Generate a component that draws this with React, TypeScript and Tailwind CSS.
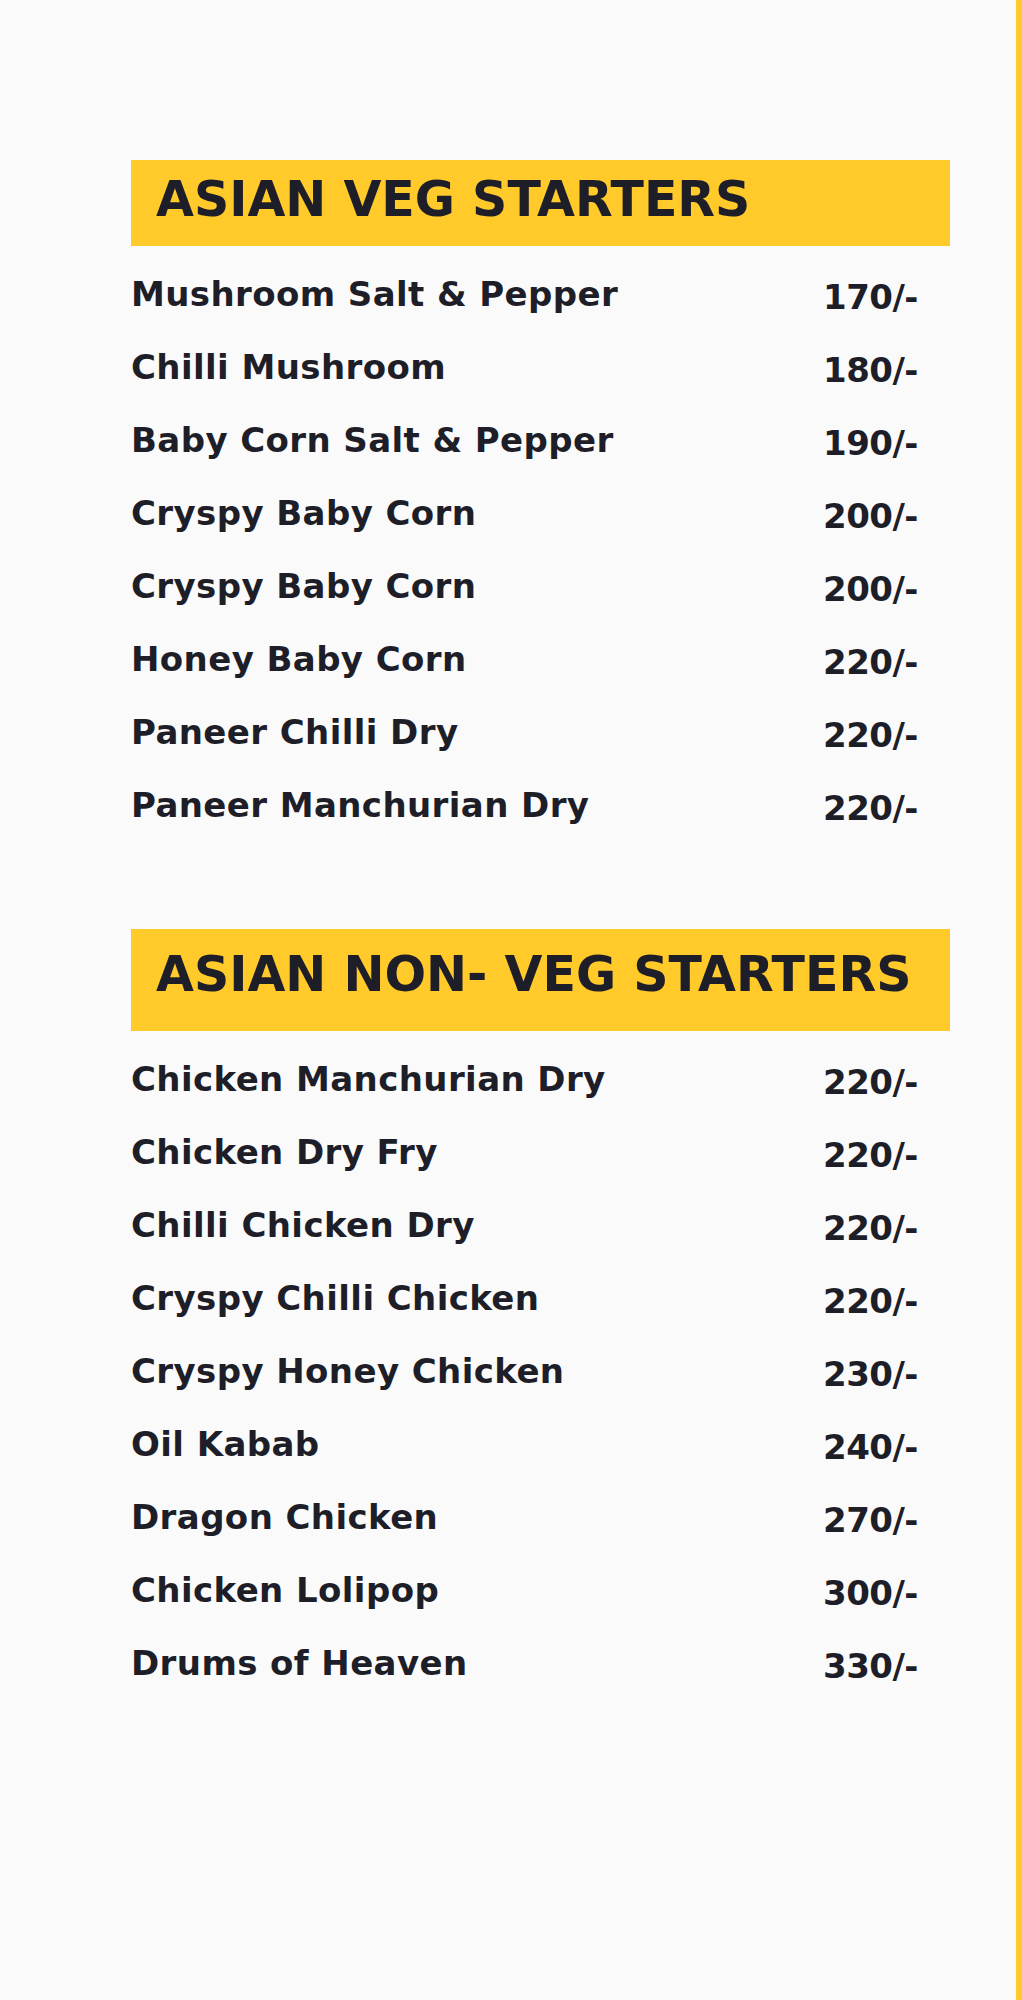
import React from "react";

const veg: [string, string][] = [
  ["Mushroom Salt & Pepper", "170/-"],
  ["Chilli Mushroom", "180/-"],
  ["Baby Corn Salt & Pepper", "190/-"],
  ["Cryspy Baby Corn", "200/-"],
  ["Cryspy Baby Corn", "200/-"],
  ["Honey Baby Corn", "220/-"],
  ["Paneer Chilli Dry", "220/-"],
  ["Paneer Manchurian Dry", "220/-"],
];

const nonVeg: [string, string][] = [
  ["Chicken Manchurian Dry", "220/-"],
  ["Chicken Dry Fry", "220/-"],
  ["Chilli Chicken Dry", "220/-"],
  ["Cryspy Chilli Chicken", "220/-"],
  ["Cryspy Honey Chicken", "230/-"],
  ["Oil Kabab", "240/-"],
  ["Dragon Chicken", "270/-"],
  ["Chicken Lolipop", "300/-"],
  ["Drums of Heaven", "330/-"],
];

function Rows({ items }: { items: [string, string][] }) {
  return (
    <div className="flex flex-col">
      {items.map(([name, price], i) => (
        <div key={i} className="flex h-[73px] justify-between pr-[32px]">
          <span className="text-[34px] leading-[73px] font-bold tracking-[0.4px] whitespace-nowrap">{name}</span>
          <span className="text-[34px] leading-[79px] font-bold tracking-[-0.5px] whitespace-nowrap">{price}</span>
        </div>
      ))}
    </div>
  );
}

export default function App() {
  return (
    <div
      className="flex w-[1022px] h-[2000px] bg-[#fafafa] text-[#1e1e28]"
      style={{ fontFamily: '"DejaVu Sans", sans-serif' }}
    >
      <div className="flex-1 pl-[131px] pr-[66px] pt-[160px]">
        <div className="h-[86px] bg-[#ffca2a] pl-[25px] pt-[16px]">
          <h2 className="text-[49px] leading-[48px] font-bold whitespace-nowrap">ASIAN VEG STARTERS</h2>
        </div>
        <div className="mt-[12px]">
          <Rows items={veg} />
        </div>
        <div className="mt-[87px] h-[102px] bg-[#ffca2a] pl-[25px] pt-[22px]">
          <h2 className="text-[49px] leading-[48px] font-bold whitespace-nowrap">ASIAN NON- VEG STARTERS</h2>
        </div>
        <div className="mt-[12px]">
          <Rows items={nonVeg} />
        </div>
      </div>
      <div className="w-[6px] bg-[#ffca2a]" />
    </div>
  );
}
